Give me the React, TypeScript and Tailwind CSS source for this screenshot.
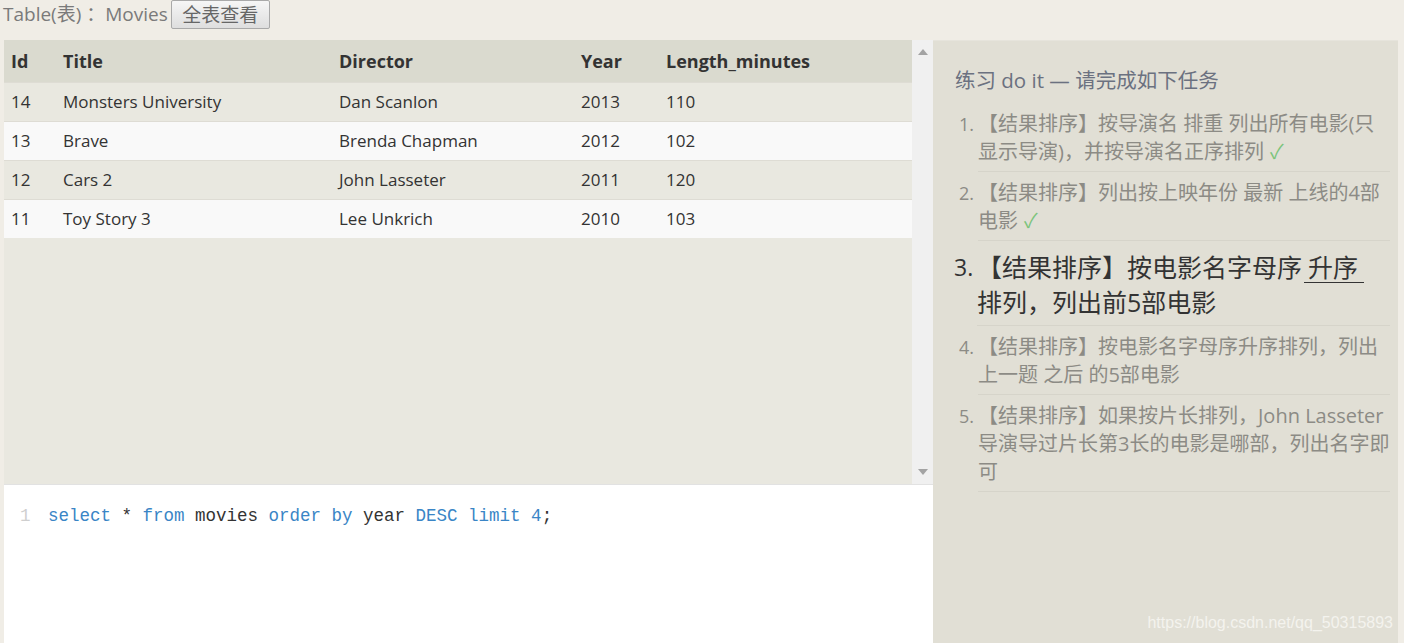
import React from "react";

const rows = [
  { id: 14, title: "Monsters University", director: "Dan Scanlon", year: 2013, len: 110 },
  { id: 13, title: "Brave", director: "Brenda Chapman", year: 2012, len: 102 },
  { id: 12, title: "Cars 2", director: "John Lasseter", year: 2011, len: 120 },
  { id: 11, title: "Toy Story 3", director: "Lee Unkrich", year: 2010, len: 103 },
];

const font = "font-['Open_Sans','Noto_Sans_CJK_SC',sans-serif]";

function Check() {
  return <span className="ml-[6px] text-[#7cc47c]">✓</span>;
}

export default function App() {
  return (
    <div className={`h-[643px] w-[1404px] overflow-hidden bg-[#f0ede6] flex flex-col ${font}`}>
      {/* top bar */}
      <div className="h-[40px] shrink-0 flex items-start pl-[3px]">
        <span className="text-[19px] leading-[28px] text-[#7a7a7a]">Table(表) ：Movies</span>
        <button className="ml-[3px] h-[29px] w-[99px] border border-[#a9a9a9] rounded-[2px] bg-gradient-to-b from-[#f6f6f6] to-[#dedede] text-[19px] leading-[26px] text-[#666]">
          全表查看
        </button>
      </div>

      <div className="flex flex-1 min-h-0 pl-[4px] pr-[6px]">
        {/* left */}
        <div className="w-[929px] flex flex-col">
          <div className="h-[444px] flex shrink-0">
            <div className="w-[908px] bg-[#e9e8e0] flex flex-col">
              <div className="h-[42px] bg-[#dadacf] flex items-center text-[18px] font-bold text-[#333]">
                <div className="w-[59px] pl-[7px]">Id</div>
                <div className="w-[276px]">Title</div>
                <div className="w-[242px]">Director</div>
                <div className="w-[85px]">Year</div>
                <div>Length_minutes</div>
              </div>
              {rows.map((r, i) => (
                <div
                  key={r.id}
                  className={`h-[39px] flex items-center text-[17px] text-[#333] border-t border-[#dedcd4] ${i % 2 === 0 ? "bg-[#e9e8e0]" : "bg-[#f9f9f9]"}`}
                >
                  <div className="w-[59px] pl-[7px]">{r.id}</div>
                  <div className="w-[276px]">{r.title}</div>
                  <div className="w-[242px]">{r.director}</div>
                  <div className="w-[85px]">{r.year}</div>
                  <div>{r.len}</div>
                </div>
              ))}
            </div>
            <div className="w-[21px] bg-[#f0f0f0] flex flex-col items-center justify-between py-[9px]">
              <svg width="10" height="6" viewBox="0 0 10 6"><polygon points="5,0 10,6 0,6" fill="#a3a3a3" /></svg>
              <svg width="10" height="6" viewBox="0 0 10 6"><polygon points="0,0 10,0 5,6" fill="#a3a3a3" /></svg>
            </div>
          </div>
          <div className="flex-1 bg-white border-t border-[#e2e2e2] pt-[19px] flex font-['Liberation_Mono',monospace] text-[17.5px] leading-[24px]">
            <span className="w-[44px] pl-[16px] text-[#cfcfcf]">1</span>
            <span className="whitespace-pre">
              <span className="text-[#3a85c6]">select</span>
              <span className="text-[#333]"> * </span>
              <span className="text-[#3a85c6]">from</span>
              <span className="text-[#333]"> movies </span>
              <span className="text-[#3a85c6]">order by</span>
              <span className="text-[#333]"> year </span>
              <span className="text-[#3a85c6]">DESC limit 4</span>
              <span className="text-[#333]">;</span>
            </span>
          </div>
        </div>

        {/* right */}
        <div className="relative flex-1 bg-[#e1dfd5] border-t border-[#e6e4dc] pl-[22px] pr-[8px] pt-[24px]">
          <div className="text-[20.5px] leading-[30px] text-[#6b7180]">练习 do it — 请完成如下任务</div>
          <ol className="mt-[15px] text-[20px] leading-[28px] text-[#8c8b85] whitespace-nowrap flex flex-col">
            <li className="flex">
              <span className="w-[23px] pl-[4px] text-[18px]">1.</span>
              <div className="flex-1 border-b border-[#d6d4ca] pb-[5px]">
                【结果排序】按导演名 排重 列出所有电影(只<br />显示导演)，并按导演名正序排列<Check />
              </div>
            </li>
            <li className="flex mt-[7px]">
              <span className="w-[23px] pl-[4px] text-[18px]">2.</span>
              <div className="flex-1 border-b border-[#d6d4ca] pb-[5px]">
                【结果排序】列出按上映年份 最新 上线的4部<br />电影<Check />
              </div>
            </li>
            <li className="flex mt-[9px] text-[25px] leading-[35px] text-[#333]">
              <span className="w-[23px] -ml-[1px] text-[23px]">3.</span>
              <div className="flex-1 border-b border-[#d6d4ca] pb-[5px]">
                【结果排序】按电影名字母序<span className="inline-block border-b border-[#333] leading-[29px] ml-[2px] pl-[4px] pr-[6px]">升序</span>
                <br />排列，列出前5部电影
              </div>
            </li>
            <li className="flex mt-[7px]">
              <span className="w-[23px] pl-[4px] text-[18px]">4.</span>
              <div className="flex-1 border-b border-[#d6d4ca] pb-[5px]">
                【结果排序】按电影名字母序升序排列，列出<br />上一题 之后 的5部电影
              </div>
            </li>
            <li className="flex mt-[7px]">
              <span className="w-[23px] pl-[4px] text-[18px]">5.</span>
              <div className="flex-1 border-b border-[#d6d4ca] pb-[5px]">
                【结果排序】如果按片长排列，John Lasseter<br />导演导过片长第3长的电影是哪部，列出名字即<br />可
              </div>
            </li>
          </ol>
          <div className="absolute right-[5px] bottom-[8px] font-['Liberation_Sans',sans-serif] text-[16px] text-[#f4f3ee]">
            https://blog.csdn.net/qq_50315893
          </div>
        </div>
      </div>
    </div>
  );
}
